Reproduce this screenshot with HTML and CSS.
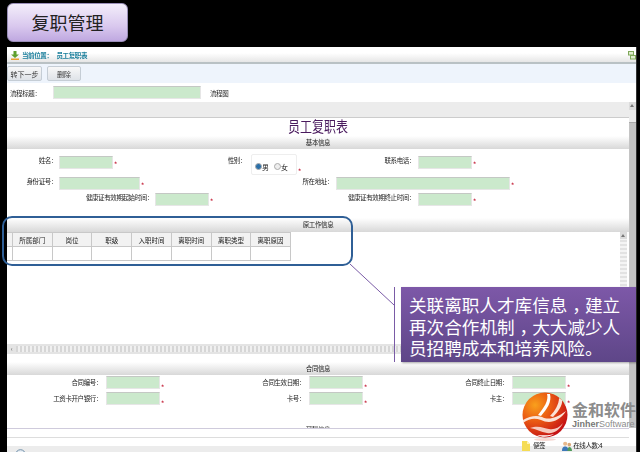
FILE: index.html
```html
<!DOCTYPE html>
<html lang="zh-CN">
<head>
    <meta charset="UTF-8">
    <title>复职管理</title>
    <link rel="stylesheet" href="styles.css">
</head>
<body>
    <div class="slide">
        <div class="slide-head"><div class="slide-title">复职管理</div></div>

        <div class="win">
            <div class="crumb">
                <svg class="crumb-icon" width="8" height="9" viewBox="0 0 8 9"><path d="M2.500 0h3v3.500H8L4 7 0 3.500h2.500z" fill="#5fa02e"/><rect x="0" y="7.500" width="8" height="1.500" fill="#e8a030"/></svg>
                <span class="crumb-text">当前位置：</span><span class="crumb-text">员工复职表</span>
                <svg class="crumb-max" width="8" height="9" viewBox="0 0 8 9"><rect x=".5" y=".5" width="5" height="3.500" fill="#dfeccf" stroke="#7fa85a"/><rect x="2.500" y="4.500" width="5" height="3.500" fill="#dfeccf" stroke="#7fa85a"/></svg>
            </div>
            <div class="toolbar">
                <button class="btn btn-next">转下一步</button>
                <button class="btn btn-del">删除</button>
            </div>
            <div class="flow-row">
                <span class="flow-label">流程标题：</span>
                <span class="input flow-input"></span>
                <span class="flow-link">流程图</span>
            </div>

            <div class="page">
                <div class="page-main">
                    <div class="grey-band"></div>
                    <h1 class="form-title"><span>员工复职表</span></h1>
                    <div class="bar">基本信息</div>

                    <div class="basic">
                        <div class="row row-a">
                            <label class="lb lb-name">姓名：</label><span class="input w54"></span><i class="star">*</i>
                            <label class="lb lb-sex">性别：</label>
                            <span class="radio-box"><span class="radio on"></span>男<span class="radio"></span>女</span><i class="star star-low">*</i>
                            <label class="lb lb-tel">联系电话：</label><span class="input w54"></span><i class="star">*</i>
                        </div>
                        <div class="row row-b">
                            <label class="lb lb-name">身份证号：</label><span class="input w81"></span><i class="star">*</i>
                            <label class="lb lb-addr">所在地址：</label><span class="input w174"></span><i class="star">*</i>
                        </div>
                        <div class="row row-c">
                            <label class="lb lb-start">健康证有效期起始时间：</label><span class="input w54"></span><i class="star">*</i>
                            <label class="lb lb-end">健康证有效期终止时间：</label><span class="input w54"></span><i class="star">*</i>
                        </div>
                    </div>

                    <div class="bar bar-work">原工作信息</div>
                    <div class="work">
                        <div class="work-scroll">
                            <table class="grid">
                                <tr><th class="c0"></th><th>所属部门</th><th>岗位</th><th>职级</th><th>入职时间</th><th>离职时间</th><th>离职类型</th><th>离职原因</th></tr>
                                <tr><td class="c0"></td><td></td><td></td><td></td><td></td><td></td><td></td><td></td></tr>
                            </table>
                        </div>
                        <div class="vscroll-in"><div class="sb-btn"></div></div>
                    </div>
                    <div class="hscroll"><span class="arrow">‹</span><div class="hscroll-track"></div></div>

                    <div class="bar bar-contract">合同信息</div>
                    <div class="contract">
                        <div class="row row-d">
                            <label class="lb lb-c1">合同编号：</label><span class="input w54"></span><i class="star">*</i>
                            <label class="lb lb-c2">合同生效日期：</label><span class="input w54"></span><i class="star">*</i>
                            <label class="lb lb-c2">合同终止日期：</label><span class="input w54"></span><i class="star">*</i>
                        </div>
                        <div class="row row-d">
                            <label class="lb lb-c1">工资卡开户银行：</label><span class="input w54"></span><i class="star">*</i>
                            <label class="lb lb-c2">卡号：</label><span class="input w54"></span><i class="star">*</i>
                            <label class="lb lb-c2">卡主：</label><span class="input w54"></span><i class="star">*</i>
                        </div>
                    </div>
                    <div class="pay-title">薪酬信息</div>
                    <div class="pay-bar"></div>
                </div>
                <div class="vscroll">
                    <div class="sb-btn sb-btn-main"></div>
                    <div class="vscroll-thumb"></div>
                </div>
            </div>

            <div class="status">
                <svg class="help-icon" width="11" height="6" viewBox="0 0 11 6"><circle cx="5.500" cy="5.500" r="4.800" fill="#e8eef4" stroke="#6f8fa8"/></svg>
                <svg class="doc-icon" width="8" height="10" viewBox="0 0 8 10"><path d="M0 0h5l3 3v7H0z" fill="#f5dc55"/><path d="M5 0l3 3H5z" fill="#fff6b8"/></svg>
                <span class="status-note">便签</span>
                <svg class="user-icon" width="10" height="10" viewBox="0 0 11 11"><circle cx="3.500" cy="3" r="2.300" fill="#e8b98c"/><path d="M0 11c0-4 1.500-5 3.500-5S7 7 7 11z" fill="#3d78b8"/><circle cx="8" cy="4" r="2" fill="#d9a878"/><path d="M6 11c0-3 1-4.500 2.200-4.500S11 8 11 11z" fill="#4f9a5a"/></svg>
                <span class="status-online">在线人数:4</span>
            </div>
        </div>

        <!-- callouts drawn over the screenshot -->
        <div class="ring"></div>
        <svg class="leader" width="50" height="100" viewBox="0 0 50 100"><path d="M1 0L45 41" fill="none" stroke="#7a5ba6"/><path d="M45.500 23V98" fill="none" stroke="#7a5ba6"/></svg>
        <div class="note">关联离职人才库信息<span class="cm">，</span>建立<br>再次合作机制<span class="cm">，</span>大大减少人<br>员招聘成本和培养风险。</div>

        <div class="logo">
            <svg width="46" height="50" viewBox="0 0 46 50">
                <defs>
                    <radialGradient id="ball" cx="28%" cy="28%" r="80%">
                        <stop offset="0" stop-color="#f9a01c"/>
                        <stop offset=".45" stop-color="#ea5a12"/>
                        <stop offset="1" stop-color="#c40f14"/>
                    </radialGradient>
                </defs>
                <circle cx="23" cy="23" r="22.500" fill="url(#ball)"/>
                <path d="M1 28c7-4 13-5 19-3 6 3 13 2 24-6-7 11-17 13-25 9-6-2-11-2-18 3z" fill="#fbe3d6"/>
                <path d="M25 2c2 6-3 14-9 21l3 1c6-7 11-14 9-22z" fill="#fff"/>
                <path d="M37 6c0 6-4 13-9 18l3 1c5-5 10-12 9-17z" fill="#fbe3d6"/>
                <path d="M8 36c8-3 14 0 19 1 5 1 10-1 14-6-4 8-10 11-16 10-6-1-11-4-17-5z" fill="#f6c9bd"/>
                <path d="M15 43c6 0 11 1 17-1-5 3-11 4-17 1z" fill="#fff"/>
                <ellipse cx="23" cy="47.500" rx="11" ry="1.500" fill="#f6d8d2"/>
            </svg>
            <div class="logo-text">
                <div class="logo-cn">金和软件</div>
                <div class="logo-en"><b>Jinher</b>Software</div>
            </div>
        </div>
    </div>
</body>
</html>
```

FILE: styles.css
```css
html, body { margin: 0; padding: 0; background: #000; }
body { font-family: "Noto Sans CJK SC", "Liberation Sans", sans-serif; font-size: 6.500px; letter-spacing: -.4px; color: #222; }
.slide { position: relative; width: 640px; height: 452px; overflow: hidden; background: #000; }

.slide-head { height: 47px; padding: 3px 0 0 7px; box-sizing: border-box; }
.slide-title { width: 121px; height: 39px; box-sizing: border-box; border: 1px solid #9a8fb8; border-radius: 6px; background: linear-gradient(#f3eefa, #d9c8ee 60%, #bfa8e0); color: #222; font-size: 18px; letter-spacing: 0; line-height: 36px; text-align: center; }

.win { margin-left: 7px; width: 629px; height: 405px; background: #fff; display: flex; flex-direction: column; overflow: hidden; border-right: 1px solid #333; filter: blur(.35px); }

.crumb { height: 17px; flex: none; box-sizing: border-box; display: flex; align-items: center; padding: 1px 0 0 4px; background: linear-gradient(#fff 40%, #e6e6e6); border-bottom: 2px solid #b9c1c4; }
.crumb-icon { margin-right: 3px; }
.crumb-text { color: #1b7f9c; font-weight: bold; margin-right: 4px; }
.crumb-max { margin-left: auto; }

.toolbar { height: 19px; flex: none; display: flex; align-items: center; background: #eef4fc; }
.btn { height: 15px; padding: 0; border: 1px solid #c5cdd5; border-radius: 2px; background: linear-gradient(#f8f8f8, #dfe3e8); color: #333; font: 7px "Noto Sans CJK SC", sans-serif; letter-spacing: 0; line-height: 12px; }
.btn-next { width: 35px; margin-right: 5px; }
.btn-del { width: 34px; }

.flow-row { height: 19px; flex: none; display: flex; align-items: center; }
.flow-label { width: 46px; color: #222; padding-left: 3px; box-sizing: border-box; }
.flow-input { width: 146px; height: 12px; }
.flow-link { margin-left: 9px; color: #222; }

.input { display: block; flex: none; height: 11px; background: #cbe9cc; border: 1px solid #e6e6e6; border-top-color: #c4c8c4; }
.w54 { width: 52px; }
.w81 { width: 79px; }
.w174 { width: 172px; }
.star { width: 5px; flex: none; font-style: normal; color: #c0102a; font-size: 8px; line-height: 12px; text-align: center; margin-top: 6px; }
.star-low { margin-top: 13px; }

.page { flex: 1; display: flex; min-height: 0; }
.page-main { flex: 1; min-width: 0; }
.grey-band { height: 15px; background: #ececec; border-bottom: 1px solid #ccc; }
.form-title { margin: 0; height: 18px; font-size: 12px; font-weight: normal; letter-spacing: 0; color: #4a1a5e; text-align: center; line-height: 16px; }
.form-title span { display: inline-block; transform: scaleY(1.2); }
.bar { height: 13px; line-height: 12px; text-align: center; color: #222; background: linear-gradient(#fff, #d8d8d8); }

.lb { flex: none; color: #222; text-align: right; }
.row { display: flex; align-items: flex-start; }
.basic { height: 69px; box-sizing: border-box; padding-top: 4px; }
.row-a { height: 22px; }
.row-a > .input, .row-b > .input, .row-c > .input { margin-top: 3px; }
.row-a .lb, .row-b .lb, .row-c .lb { line-height: 13px; margin-top: 1px; }
.row-b { height: 16px; margin-top: -1px; }
.row-c { height: 16px; }
.lb-name { width: 50px; margin-right: 2px; }
.lb-sex { width: 128px; margin-right: 5px; }
.radio-box { flex: none; display: flex; align-items: center; width: 46px; height: 21px; box-sizing: border-box; padding: 4px 0 0 3px; margin-top: 1px; border: 1px solid #eee; border-radius: 2px; color: #222; font-size: 7px; letter-spacing: 0; }
.radio { width: 5px; height: 5px; margin-left: 5px; border: 1px solid #aaa; border-radius: 50%; background: #eee; }
.radio.on { background: #2a6fa8; margin-left: 0; }
.lb-tel { width: 113px; margin-right: 3px; }
.lb-addr { width: 188px; margin-right: 3px; }
.lb-start { width: 146px; margin-right: 2px; }
.lb-end { width: 201px; margin-right: 3px; }

.bar-work { height: 14px; line-height: 13px; }
.work { height: 112px; display: flex; }
.work-scroll { flex: 1; }
.grid { border-collapse: collapse; table-layout: fixed; width: 284px; }
.grid th, .grid td { height: 13px; padding: 0; border: 1px solid #c8c8c8; border-left: 0; font-weight: normal; letter-spacing: 0; color: #222; text-align: center; line-height: 12px; }
.grid th { width: 38.600px; background: #f2f2f2; }
.grid .c0 { width: 5px; }
.vscroll-in { width: 7px; margin-right: 2px; background: repeating-linear-gradient(#e2e2e2 0 2px, #f4f4f4 2px 4px); }
.sb-btn { height: 7px; background: #dcdcdc; position: relative; }
.sb-btn::after { content: ""; position: absolute; left: 1px; top: 2px; border: 2.500px solid transparent; border-top: 0; border-bottom: 3px solid #777; }

.hscroll { height: 10px; display: flex; background: #e4e4e4; }
.arrow { width: 9px; line-height: 9px; text-align: center; color: #555; }
.hscroll-track { flex: 1; margin: 2px 0; background: repeating-linear-gradient(90deg, #d6d6d6 0 2px, #f0f0f0 2px 4px); }

.bar-contract { margin-top: 8px; height: 13px; }
.contract { height: 51px; box-sizing: border-box; padding-top: 1px; }
.row-d { height: 16px; }
.row-d .lb { line-height: 12px; }
.lb-c1 { width: 95px; margin-right: 4px; }
.lb-c2 { width: 140px; margin-right: 4px; }
.pay-title { height: 2px; overflow: hidden; line-height: 6px; text-align: center; color: #444; }
.pay-bar { height: 10px; box-sizing: border-box; border-top: 1px solid #cfcbdc; border-bottom: 1px solid #ddd; }

.vscroll { width: 7px; height: 326px; flex: none; background: #c4c4c4; display: flex; flex-direction: column; }
.sb-btn-main { height: 8px; }
.vscroll-thumb { height: 12px; background: #ececec; border-bottom: 1px solid #aaa; }

.status { height: 6px; flex: none; display: flex; align-items: flex-start; background: #ececec; color: #222; padding-left: 8px; line-height: 9px; overflow: visible; }
.help-icon { margin-top: 3px; margin-right: 496px; }
.doc-icon { margin-top: -5px; margin-right: 3px; }
.status-note { margin-top: -5px; margin-right: 17px; }
.user-icon { margin-top: -5px; margin-right: 1px; }
.status-online { margin-top: -5px; }

.ring { position: absolute; left: 2px; top: 216px; width: 347px; height: 46px; border: 2px solid #2f5f96; border-radius: 10px; }
.leader { position: absolute; left: 349px; top: 264px; }
.note { position: absolute; left: 401px; top: 287px; width: 235px; height: 75px; box-sizing: border-box; padding: 7px 0 0 8px; background: linear-gradient(#7d58a8, #5e4688); box-shadow: 1px 1px 2px rgba(0,0,0,.35); color: #fff; font-size: 17.600px; letter-spacing: 0; line-height: 21.500px; white-space: nowrap; }
.cm { display: inline-block; transform: translateX(5px); }

.logo { position: absolute; left: 522px; top: 392px; display: flex; align-items: flex-start; }
.logo-text { margin: 8px 0 0 4px; color: #8c8c8c; letter-spacing: 0; }
.logo-cn { font-size: 16px; line-height: 19px; font-weight: bold; white-space: nowrap; }
.logo-en { font-size: 9px; line-height: 10px; white-space: nowrap; font-family: "Liberation Sans", sans-serif; }
.logo-en b { color: #777; }
```
